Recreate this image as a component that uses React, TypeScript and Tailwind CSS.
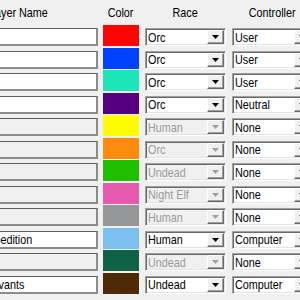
import React from "react";

type Row = {
  name: string;
  nameEnabled: boolean;
  color: string;
  race: string;
  raceEnabled: boolean;
  controller: string;
};

const rows: Row[] = [
  { name: "", nameEnabled: true, color: "#ff0303", race: "Orc", raceEnabled: true, controller: "User" },
  { name: "", nameEnabled: true, color: "#0042ff", race: "Orc", raceEnabled: true, controller: "User" },
  { name: "", nameEnabled: true, color: "#1ce6b9", race: "Orc", raceEnabled: true, controller: "User" },
  { name: "", nameEnabled: true, color: "#540081", race: "Orc", raceEnabled: true, controller: "Neutral" },
  { name: "", nameEnabled: false, color: "#fffc01", race: "Human", raceEnabled: false, controller: "None" },
  { name: "", nameEnabled: false, color: "#fe8a0e", race: "Orc", raceEnabled: false, controller: "None" },
  { name: "", nameEnabled: false, color: "#20c000", race: "Undead", raceEnabled: false, controller: "None" },
  { name: "", nameEnabled: false, color: "#e55bb0", race: "Night Elf", raceEnabled: false, controller: "None" },
  { name: "", nameEnabled: false, color: "#959697", race: "Human", raceEnabled: false, controller: "None" },
  { name: "Alliance Expedition", nameEnabled: true, color: "#7ebff1", race: "Human", raceEnabled: true, controller: "Computer" },
  { name: "", nameEnabled: false, color: "#106246", race: "Undead", raceEnabled: false, controller: "None" },
  { name: "Undead Servants", nameEnabled: true, color: "#4e2a04", race: "Undead", raceEnabled: true, controller: "Computer" },
];

function Arrow({ disabled }: { disabled?: boolean }) {
  return (
    <svg width="7" height="4" viewBox="0 0 7 4">
      <path d="M0 0H7L3.5 4Z" fill={disabled ? "#a0a0a0" : "#000000"} />
    </svg>
  );
}

function Narrow({ children, center }: { children: React.ReactNode; center?: boolean }) {
  return (
    <span className={`inline-block whitespace-nowrap scale-x-[0.83] ${center ? "origin-center" : "origin-left"}`}>
      {children}
    </span>
  );
}

function Combo({ value, enabled }: { value: string; enabled: boolean }) {
  return (
    <div
      className={`mt-[3px] h-[18px] w-[81px] flex border border-t-[#a0a0a0] border-l-[#a0a0a0] border-r-white border-b-white shadow-[inset_1px_1px_0_#696969,inset_-1px_-1px_0_#e3e3e3] p-[1px] ${
        enabled ? "bg-white" : "bg-[#f0f0f0]"
      }`}
    >
      <div
        className={`flex-1 flex items-center pl-[1px] overflow-hidden whitespace-nowrap leading-none ${
          enabled ? "text-black" : "text-[#9a9a9a]"
        }`}
      >
        <Narrow>{value}</Narrow>
      </div>
      <div className="w-[17px] h-full flex items-center justify-center bg-[#f0f0f0] border border-t-white border-l-white border-r-[#696969] border-b-[#696969] shadow-[inset_-1px_-1px_0_#a0a0a0]">
        <Arrow disabled={!enabled} />
      </div>
    </div>
  );
}

export default function App() {
  return (
    <div
      className="w-[300px] h-[300px] overflow-hidden bg-[#f0f0f0] text-[13px]"
      style={{ fontFamily: '"Liberation Sans", Arial, sans-serif' }}
    >
      <div className="-ml-[65px] w-max">
        <div className="grid grid-cols-[168px_42px_87px_81px] h-[25px] items-center text-black">
          <div className="pr-[5px] flex justify-center"><Narrow center>Player Name</Narrow></div>
          <div className="pr-[6px] flex justify-center"><Narrow center>Color</Narrow></div>
          <div className="pr-[6px] flex justify-center"><Narrow center>Race</Narrow></div>
          <div className="flex justify-center"><Narrow center>Controller</Narrow></div>
        </div>
        <div className="grid grid-cols-[168px_42px_87px_81px] auto-rows-[22.5px]">
          {rows.map((r, i) => (
            <React.Fragment key={i}>
              <div className="pr-[5px]">
                <div
                  className={`mt-[3px] h-[18px] flex items-center pl-[5px] whitespace-nowrap overflow-hidden leading-none border-t border-l border-t-[#5e5e5e] border-l-[#5e5e5e] border-r-2 border-b-2 border-r-[#8c8c8c] border-b-[#8c8c8c] ${
                    r.nameEnabled ? "bg-white" : "bg-[#f0f0f0]"
                  }`}
                >
                  <Narrow>{r.name}</Narrow>
                </div>
              </div>
              <div className="pr-[6px]">
                <div className="h-[21px] w-[36px]" style={{ backgroundColor: r.color }} />
              </div>
              <div className="pr-[6px]">
                <Combo value={r.race} enabled={r.raceEnabled} />
              </div>
              <div>
                <Combo value={r.controller} enabled={true} />
              </div>
            </React.Fragment>
          ))}
        </div>
      </div>
    </div>
  );
}
